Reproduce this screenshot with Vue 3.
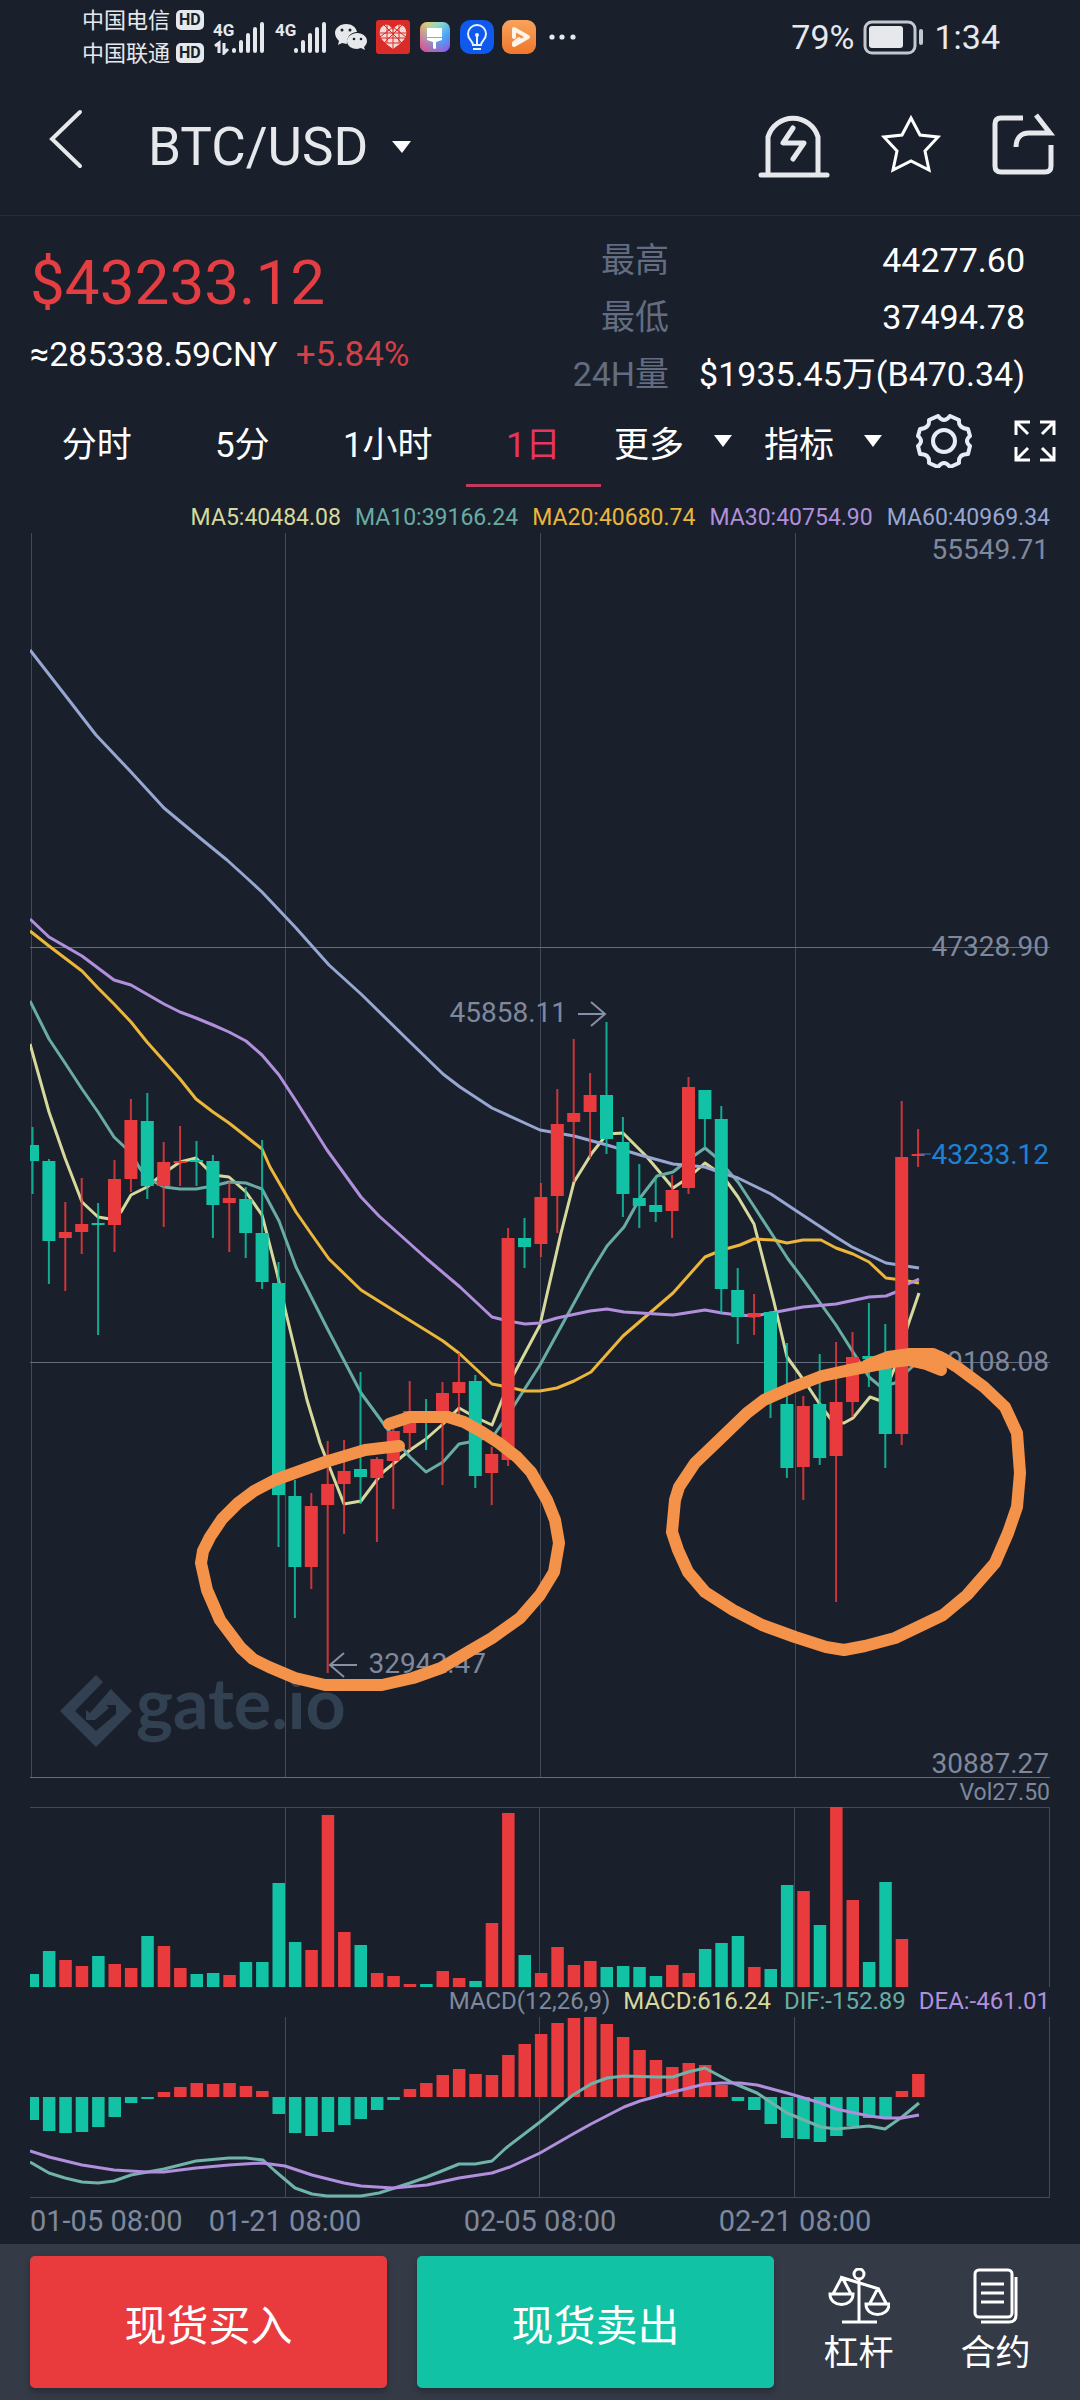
<template>
  <div class="page">
    <div class="status">
      <div class="carriers">
        <div class="carrier">中国电信 <span class="hd">HD</span></div>
        <div class="carrier">中国联通 <span class="hd">HD</span></div>
      </div>
      <svg class="signals" width="114" height="36" viewBox="212 18 114 36">
        <g class="net">
          <text x="212" y="35">4G</text>
          <text x="274" y="35">4G</text>
        </g>
        <path class="line" stroke-width="3" d="M214 45l4-3v10M223 42v10l4-4" />
        <path class="line" stroke-width="4" stroke-linecap="round" d="M233 49v1M240 41v9M247 34v16M254 28v22M261 23v27M295 49v1M302 41v9M309 34v16M316 28v22M323 23v27" />
      </svg>
      <svg class="apps" width="242" height="36" viewBox="335 18 242 36">
        <defs>
          <linearGradient id="paint" x1="0" y1="0" x2="1" y2="1">
            <stop offset="0" stop-color="#ffc94d" />
            <stop offset="0.35" stop-color="#8fd9c9" />
            <stop offset="0.65" stop-color="#4aa8f5" />
            <stop offset="1" stop-color="#9a4bea" />
          </linearGradient>
          <linearGradient id="paintWarm" x1="0" y1="1" x2="0.6" y2="0.5">
            <stop offset="0" stop-color="#ee3f86" />
            <stop offset="1" stop-color="#ee3f86" stop-opacity="0" />
          </linearGradient>
          <linearGradient id="play" x1="0" y1="0" x2="0" y2="1">
            <stop offset="0" stop-color="#f8a35c" />
            <stop offset="1" stop-color="#f0762c" />
          </linearGradient>
        </defs>
        <path fill="#e6e8ec" d="M346 23c-6 0-11 4-11 9 0 3 2 6 4 8l-1 4 4-2 5 1c-1-7 4-12 10-12-1-5-5-8-11-8z" />
        <path fill="#e6e8ec" d="M357 32c-5 0-10 4-10 8 0 5 5 8 10 8l4-1 4 2-1-3c2-2 3-4 3-6 0-4-4-8-10-8z" />
        <g fill="#19202c">
          <circle cx="342" cy="29" r="1.5" /><circle cx="350" cy="29" r="1.5" />
          <circle cx="354" cy="38" r="1.3" /><circle cx="361" cy="38" r="1.3" />
        </g>
        <rect x="376" y="19" width="34" height="34" rx="3" fill="#d92b28" />
        <path fill="#f6d9d5" d="M393 29c2-4 5-6 8-5 4 1 6 5 5 10-1 6-8 10-13 14-5-4-12-8-13-14-1-5 1-9 5-10 3-1 6 1 8 5z" />
        <path class="knot" d="M380 32h26M381 37h24M385 42h16M384 24l18 18M402 24l-18 18M393 28v20M387 24v18M399 24v18M380 36l13-10 13 10" />
        <rect x="420" y="21" width="30" height="30" rx="7" fill="url(#paint)" />
        <rect x="420" y="21" width="30" height="30" rx="7" fill="url(#paintWarm)" />
        <path fill="#fff" d="M427 27h15v9h-15zM427 37h15v2l-6 2v6q-1 2-3 0v-6l-6-2z" />
        <rect x="460" y="19" width="34" height="34" rx="10" fill="#0f59ec" />
        <path fill="none" stroke="#e8f1ff" stroke-width="2" d="M473 44c0-4-5-5-5-11a9 9 0 0 1 18 0c0 6-5 7-5 11zM473 48h8M477 34v10" />
        <circle cx="477" cy="34" r="2" fill="#e8f1ff" />
        <rect x="502" y="19" width="34" height="34" rx="9" fill="url(#play)" />
        <path fill="none" stroke="#fff4e8" stroke-width="4" stroke-linejoin="round" stroke-linecap="round" d="M514 36v-8l14 8-14 8v-2l5-4" />
        <g fill="#e6e8ec">
          <circle cx="552" cy="36" r="2.6" /><circle cx="562" cy="36" r="2.6" /><circle cx="573" cy="36" r="2.6" />
        </g>
      </svg>
      <div class="power">
        <span>79%</span>
        <svg width="62" height="36" viewBox="862 18 62 36">
          <rect x="864" y="21" width="50" height="31" rx="7" fill="none" stroke="#c3c7ce" stroke-width="3" />
          <rect x="868" y="25" width="34" height="22" rx="3" fill="#e6e8ec" />
          <rect x="918" y="28" width="4" height="16" rx="2" fill="#c3c7ce" />
        </svg>
        <span>1:34</span>
      </div>
    </div>

    <header class="topbar">
      <button class="icon-btn back" aria-label="返回">
        <svg width="36" height="62" viewBox="0 0 36 62">
          <path class="line" stroke-width="4" stroke-linecap="round" d="M32 4L4 31l28 27" />
        </svg>
      </button>
      <button class="pair">
        BTC/USD
        <svg width="20" height="12" viewBox="0 0 20 12"><path fill="#fff" d="M0 0h19l-9 12z" /></svg>
      </button>
      <div class="actions">
        <button class="icon-btn" aria-label="提醒">
          <svg width="72" height="70" viewBox="759 109 72 70">
            <path class="line" stroke-width="5" d="M769 173v-36a26 26 0 0 1 50 0v36" />
            <path class="line" stroke-width="5" stroke-linecap="round" d="M762 175h66" />
            <path class="line" stroke-width="5" stroke-linecap="round" stroke-linejoin="round" d="M794 128l-10 15h21l-11 16" />
          </svg>
        </button>
        <button class="icon-btn" aria-label="收藏">
          <svg width="62" height="60" viewBox="878 115 62 60">
            <path fill="none" stroke="#fff" stroke-width="3" d="M909 119l9 17 18 2-13 14 4 19-18-9-18 9 4-19-13-14 18-2z" />
          </svg>
        </button>
        <button class="icon-btn" aria-label="分享">
          <svg width="66" height="64" viewBox="992 109 66 64">
            <path class="line" stroke-width="5" d="M1023 115h-22q-6 0-6 6v42q0 6 6 6h44q6 0 6-6v-21M1016 144c0-9 5-14 13-14h21l-14-18" />
          </svg>
        </button>
      </div>
    </header>

    <section class="quote">
      <div>
        <div class="price">$43233.12</div>
        <div class="fiat">≈285338.59CNY <span class="change">+5.84%</span></div>
      </div>
      <dl class="stats">
        <dt>最高</dt><dd>44277.60</dd>
        <dt>最低</dt><dd>37494.78</dd>
        <dt>24H量</dt><dd>$1935.45万(B470.34)</dd>
      </dl>
    </section>

    <nav class="tabs">
      <div class="periods">
        <button v-for="p in periods" :key="p" class="tab" :class="{ active: p === current }" @click="current = p">{{ p }}</button>
      </div>
      <button v-for="m in menus" :key="m" class="menu">
        {{ m }}
        <svg width="18" height="12" viewBox="0 0 18 12"><path fill="#fff" d="M0 0h18l-9 12z" /></svg>
      </button>
      <div class="tools">
        <button class="icon-btn" aria-label="设置">
          <svg width="56" height="54" viewBox="0 0 56 54">
            <path class="gear" d="M22 2q6 8 12 0l9 4q-1 8 9 9l2 7q-6 5 0 10l-2 8q-10 0-9 9l-9 4q-6-8-12 0l-9-4q1-9-9-9l-2-8q6-5 0-10l2-7q10-1 9-9z" />
            <circle class="gear" cx="28" cy="27" r="11" />
          </svg>
        </button>
        <button class="icon-btn" aria-label="全屏">
          <svg width="42" height="42" viewBox="0 0 42 42">
            <path fill="none" stroke="#fff" stroke-width="3" d="M2 15V2h14M2 2l12 12M26 2h14v13M40 2L28 14M2 27v13h14M2 40l12-12M26 40h14V27M40 40L28 28" />
          </svg>
        </button>
      </div>
    </nav>

    <main class="charts">
      <div class="legend">
        <span v-for="m in averages" :key="m.name" :style="{ color: m.color }">{{ m.name }}:{{ m.value }}</span>
      </div>

      <svg class="plot" viewBox="30 532 1020 1247">
        <path class="grid" d="M31 533V1777M285 533V1777M540 533V1777M795 533V1777" />
        <path class="grid strong" d="M30 947H1050M30 1362H1050M30 1777H1050" />
        <g class="watermark">
          <path d="M111 1689L132 1711 96 1747 60 1711 96 1675 103 1682 75 1711 96 1731 116 1714V1705H106L109 1708 95 1720H86V1710L90 1713Z" />
          <text x="136" y="1729">gate.io</text>
        </g>
        <polyline v-for="m in averages" :key="m.name" class="ma" :points="m.points" :stroke="m.color" />
        <g v-for="(c, i) in candles" :key="i" :fill="colorOf(c)">
          <rect :x="centre(i) - 1" :y="c[1]" width="2" :height="c[4] - c[1]" opacity="0.85" />
          <rect :x="centre(i) - 6.5" :y="c[2]" width="13" :height="c[3] - c[2]" />
        </g>
        <g class="axis">
          <text x="1049" y="559">55549.71</text>
          <text x="1049" y="956">47328.90</text>
          <text x="1049" y="1371">39108.08</text>
          <text x="1049" y="1773">30887.27</text>
          <text x="567" y="1022">45858.11</text>
          <text x="486" y="1673">32942.47</text>
          <text class="last" x="1049" y="1164">43233.12</text>
        </g>
        <path class="pointer" d="M578 1014h27M591 1002l14 12-14 12M357 1665h-27M344 1653l-14 12 14 12" />
        <path stroke="#2b7fd0" stroke-width="1" d="M919 1154h12" />
        <polyline v-for="(p, i) in marks" :key="i" class="mark" :points="p" />
      </svg>

      <div class="legend vol-legend"><span>Vol27.50</span></div>
      <svg class="plot" viewBox="30 1806 1020 181">
        <path class="grid" d="M30 1807H1050M285 1807V1987M539 1807V1987M794 1807V1987M1049 1807V1987" />
        <rect v-for="(v, i) in volumes" :key="i" :x="centre(i) - 6" :y="1987 - v" width="12.5" :height="v" :fill="colorOf(candles[i])" />
      </svg>

      <div class="legend macd-legend">
        <span>MACD(12,26,9)</span>
        <span class="macd">MACD:616.24</span>
        <span class="dif">DIF:-152.89</span>
        <span class="dea">DEA:-461.01</span>
      </div>
      <svg class="plot" viewBox="30 2016 1020 182">
        <path class="grid" d="M30 2197H1050M285 2017V2197M539 2017V2197M794 2017V2197M1049 2017V2197" />
        <rect v-for="(v, i) in macd" :key="i" :x="centre(i) - 6" :y="v > 0 ? 2097 - v : 2097" width="12.5" :height="Math.abs(v)" :fill="v > 0 ? red : green" />
        <polyline class="ma" stroke="#70b3aa" :points="dif" />
        <polyline class="ma" stroke="#b18fdc" :points="dea" />
      </svg>

      <div class="dates">
        <span v-for="d in dates" :key="d">{{ d }}</span>
      </div>
    </main>

    <footer class="trade">
      <button class="order buy">现货买入</button>
      <button class="order sell">现货卖出</button>
      <div class="links">
        <a href="#margin">
          <svg width="62" height="56" viewBox="0 0 62 56">
            <g fill="none" stroke="#fff" stroke-width="3">
              <circle cx="31" cy="6" r="5" />
              <path d="M31 11v42M14 54h35M12 9l39 12M14 9L5 26M14 9l9 17M2 26h23c0 14-23 14-23 0zM50 20l-9 17M50 20l9 17M38 36h23c0 14-23 14-23 0z" />
            </g>
          </svg>
          杠杆
        </a>
        <a href="#futures">
          <svg width="46" height="56" viewBox="0 0 46 56">
            <g fill="none" stroke="#fff" stroke-width="3">
              <rect x="2" y="2" width="37" height="47" rx="4" />
              <path d="M43 9v38q0 7-7 7H8M8 16h23M8 25h23M8 34h23" />
            </g>
          </svg>
          合约
        </a>
      </div>
    </footer>
  </div>
</template>

<script setup>
import { ref } from "vue";

const red = "#e93b3d";
const green = "#11c2a5";

const periods = ["分时", "5分", "1小时", "1日"];
const menus = ["更多", "指标"];
const current = ref("1日");
const dates = ["01-05 08:00", "01-21 08:00", "02-05 08:00", "02-21 08:00"];

const centre = (i) => 32.5 + i * 16.4;
const colorOf = (c) => (c[0] ? red : green);

// [rising, high, body top, body bottom, low]
const candles = [
  [0, 1127, 1145, 1161, 1194], [0, 1159, 1161, 1241, 1284], [1, 1202, 1232, 1238, 1291],
  [1, 1178, 1224, 1232, 1254], [0, 1203, 1223, 1225, 1335], [1, 1160, 1179, 1225, 1252],
  [1, 1099, 1120, 1179, 1192], [0, 1093, 1121, 1186, 1199], [1, 1142, 1162, 1186, 1227],
  [1, 1126, 1161, 1163, 1186], [0, 1141, 1160, 1162, 1186], [0, 1155, 1161, 1205, 1238],
  [1, 1182, 1198, 1203, 1252], [0, 1187, 1199, 1233, 1258], [0, 1140, 1233, 1282, 1289],
  [0, 1262, 1283, 1495, 1547], [0, 1480, 1496, 1567, 1618], [1, 1493, 1506, 1567, 1589],
  [1, 1441, 1484, 1505, 1673], [1, 1440, 1471, 1484, 1534], [0, 1372, 1469, 1477, 1504],
  [1, 1457, 1459, 1478, 1542], [1, 1427, 1431, 1461, 1509], [1, 1381, 1411, 1433, 1450],
  [0, 1399, 1411, 1413, 1450], [1, 1382, 1393, 1415, 1485], [1, 1353, 1382, 1393, 1417],
  [0, 1375, 1381, 1476, 1488], [1, 1447, 1454, 1473, 1505], [1, 1228, 1238, 1460, 1466],
  [0, 1218, 1238, 1247, 1268], [1, 1183, 1197, 1244, 1257], [1, 1089, 1124, 1196, 1233],
  [1, 1039, 1113, 1122, 1182], [1, 1073, 1095, 1112, 1158], [0, 1022, 1095, 1139, 1154],
  [0, 1117, 1142, 1194, 1217], [0, 1164, 1198, 1206, 1228], [0, 1177, 1205, 1212, 1222],
  [1, 1175, 1190, 1211, 1238], [1, 1077, 1087, 1188, 1194], [0, 1090, 1090, 1119, 1148],
  [0, 1106, 1119, 1289, 1313], [0, 1268, 1290, 1317, 1344], [1, 1294, 1313, 1317, 1335],
  [0, 1311, 1312, 1400, 1418], [0, 1343, 1404, 1468, 1478], [1, 1396, 1406, 1467, 1500],
  [0, 1354, 1404, 1458, 1465], [1, 1342, 1402, 1456, 1602], [1, 1332, 1357, 1402, 1417],
  [0, 1303, 1356, 1359, 1387], [0, 1324, 1358, 1434, 1468], [1, 1101, 1157, 1434, 1445],
  [1, 1129, 1154, 1156, 1167],
];

const volumes = [
  13, 36, 27, 21, 31, 23, 19, 51, 41, 19, 13, 14, 12, 25, 25, 104, 45, 37, 172, 55, 42, 14, 11, 3, 3, 16, 9, 6,
  64, 174, 32, 14, 40, 22, 26, 20, 21, 20, 11, 22, 14, 38, 44, 51, 20, 18, 102, 96, 62, 180, 87, 25, 105, 48,
];

const macd = [
  -23, -34, -36, -35, -30, -20, -6, -2, 5, 10, 14, 13, 14, 11, 6, -17, -36, -39, -35, -28, -22, -13, -3, 8, 14,
  22, 28, 23, 22, 42, 53, 63, 74, 79, 80, 73, 60, 47, 37, 30, 34, 32, 12, -4, -13, -27, -41, -42, -45, -39, -29,
  -21, -20, 6, 23,
];

const averages = [
  {
    name: "MA5",
    value: "40484.08",
    color: "#d6d99b",
    points:
      "30,1044 49,1112 65,1158 82,1202 98,1217 110,1219 121,1212 131,1195 147,1187 164,1173 180,1162 196,1158 213,1175 229,1177 246,1192 262,1215 277,1273 286,1313 307,1400 320,1443 344,1504 361,1501 382,1473 410,1450 426,1439 443,1424 459,1408 475,1417 492,1425 508,1385 540,1325 561,1233 574,1182 592,1153 607,1134 623,1133 647,1157 673,1188 688,1178 705,1163 722,1175 738,1197 754,1224 774,1302 787,1357 805,1382 819,1403 833,1422 844,1423 853,1418 870,1397 881,1401 895,1367 908,1325 919,1293",
  },
  {
    name: "MA10",
    value: "39166.24",
    color: "#68aca4",
    points:
      "30,1001 49,1039 65,1063 82,1089 98,1112 114,1137 131,1153 139,1167 147,1178 164,1187 180,1189 196,1189 213,1186 229,1182 246,1183 262,1189 279,1221 296,1267 327,1328 361,1393 394,1438 410,1457 426,1472 443,1462 459,1444 475,1441 494,1435 508,1415 540,1365 557,1334 591,1272 607,1246 624,1227 640,1198 657,1176 673,1172 688,1160 705,1148 717,1158 738,1182 755,1208 788,1259 803,1279 836,1325 853,1352 869,1377 881,1387 895,1383 912,1367 919,1360",
  },
  {
    name: "MA20",
    value: "40680.74",
    color: "#ecb63b",
    points:
      "30,931 49,946 82,971 98,988 114,1004 131,1022 147,1042 180,1079 196,1099 213,1112 229,1123 262,1149 270,1167 296,1212 312,1235 329,1259 361,1290 393,1310 427,1331 443,1341 460,1354 492,1384 508,1387 525,1391 540,1391 557,1388 574,1381 591,1372 623,1336 673,1293 705,1257 722,1250 740,1245 754,1239 774,1240 787,1243 803,1240 821,1240 836,1248 853,1254 869,1262 886,1278 902,1280 919,1283",
  },
  {
    name: "MA30",
    value: "40754.90",
    color: "#b18fdc",
    points:
      "30,919 49,937 82,956 114,980 131,985 164,1004 180,1012 196,1018 213,1025 229,1032 246,1041 262,1055 279,1075 296,1101 327,1150 361,1197 379,1216 427,1259 460,1287 492,1317 508,1321 525,1324 540,1323 557,1318 590,1311 607,1309 624,1312 673,1315 705,1310 722,1313 738,1315 754,1316 771,1313 787,1310 803,1307 836,1304 869,1297 886,1296 896,1292 908,1284 919,1279",
  },
  {
    name: "MA60",
    value: "40969.34",
    color: "#98a6d2",
    points:
      "30,650 65,695 96,735 131,772 164,808 200,838 227,860 249,880 262,892 296,928 329,965 361,994 410,1042 443,1074 460,1087 492,1108 540,1130 574,1136 607,1145 640,1155 673,1164 705,1167 722,1173 738,1178 771,1194 795,1210 836,1237 852,1247 886,1263 919,1268",
  },
];

const dif =
  "30,2162 49,2173 65,2178 82,2182 98,2183 114,2181 131,2175 164,2169 196,2161 229,2158 246,2158 263,2160 275,2171 295,2188 312,2194 327,2196 361,2196 379,2193 410,2183 427,2177 459,2164 475,2164 492,2161 506,2148 540,2122 573,2095 591,2084 607,2078 624,2076 657,2077 673,2077 688,2072 705,2068 733,2083 757,2093 787,2113 821,2127 836,2129 869,2126 885,2129 902,2117 919,2103";
const dea =
  "30,2151 49,2157 82,2165 114,2170 147,2172 164,2172 196,2168 229,2165 262,2163 285,2166 312,2175 344,2183 361,2186 393,2188 427,2185 459,2178 492,2173 510,2167 540,2153 573,2134 591,2124 624,2107 640,2101 673,2092 705,2084 722,2083 740,2083 757,2085 787,2093 821,2103 836,2109 869,2116 885,2118 902,2118 919,2115";

// hand-drawn circles
const marks = [
  "399,1446 365,1450 325,1462 275,1480 254,1491 238,1503 222,1519 210,1537 203,1551 201,1563 207,1590 220,1620 241,1648 253,1659 269,1667 295,1678 325,1685 382,1685 413,1678 441,1668 468,1652 492,1638 520,1618 540,1595 554,1572 559,1543 555,1520 547,1500 531,1472 517,1457 499,1443 482,1432 464,1422 448,1417 410,1417 389,1424",
  "941,1370 926,1364 908,1360 891,1362 850,1370 822,1376 791,1388 764,1400 747,1413 719,1440 695,1463 679,1487 675,1500 672,1532 678,1550 688,1572 705,1592 733,1610 762,1625 795,1637 826,1647 844,1650 865,1646 895,1638 943,1615 967,1595 995,1563 1008,1533 1017,1507 1020,1473 1017,1433 1005,1407 984,1387 957,1367 944,1359 933,1354 910,1354 888,1357 867,1365",
];
</script>

<style>
body {
  margin: 0;
  background: #19202c;
}
</style>

<style scoped>
.page {
  display: flex;
  flex-direction: column;
  min-height: 100vh;
  background: #19202c;
  color: #fff;
  font-family: Roboto, "Noto Sans CJK SC", sans-serif;
}

button {
  padding: 0;
  border: 0;
  background: none;
  color: inherit;
  font: inherit;
  cursor: pointer;
}

svg {
  display: block;
}

.line {
  fill: none;
  stroke: #e6e8ec;
}

.icon-btn {
  display: block;
}

/* status bar */
.status {
  display: flex;
  align-items: center;
  height: 73px;
  padding: 0 80px 0 82px;
  color: #e6e8ec;
}

.carrier {
  display: flex;
  align-items: center;
  gap: 6px;
  font-size: 22px;
  line-height: 33px;
}

.hd {
  padding: 0 3px;
  border-radius: 5px;
  background: #e6e8ec;
  color: #19202c;
  font-size: 16px;
  font-weight: 700;
  line-height: 20px;
}

.signals {
  margin-left: 9px;
}

.net {
  fill: #e6e8ec;
  font-family: "Liberation Sans Narrow", Roboto, sans-serif;
  font-size: 17px;
  font-weight: 700;
}

.apps {
  margin-left: 8px;
}

.knot {
  fill: none;
  stroke: #d92b28;
  stroke-width: 1;
}

.power {
  display: flex;
  align-items: center;
  gap: 9px;
  margin-left: auto;
  font-size: 34px;
}

/* top bar */
.topbar {
  display: flex;
  align-items: center;
  height: 142px;
  padding: 0 22px 0 48px;
  border-bottom: 1px solid #272e3c;
}

.back {
  padding-bottom: 10px;
}

.pair {
  display: flex;
  align-items: center;
  gap: 24px;
  margin-left: 64px;
  padding-top: 6px;
  color: #e6e8ec;
  font-size: 53px;
}

.actions {
  display: flex;
  align-items: center;
  gap: 50px;
  margin-left: auto;
}

/* quote */
.quote {
  display: flex;
  justify-content: space-between;
  padding: 16px 55px 0 30px;
}

.price {
  color: #e43d42;
  font-size: 62px;
  line-height: 102px;
}

.fiat {
  font-size: 34px;
  line-height: 40px;
}

.change {
  margin-left: 10px;
  color: #d23f45;
  font-size: 35px;
}

.stats {
  display: grid;
  grid-template-columns: auto auto;
  column-gap: 30px;
  margin: 0;
  font-size: 34px;
  line-height: 57px;
  text-align: right;
}

.stats dt {
  color: #636c80;
}

.stats dd {
  margin: 0;
}

/* period tabs */
.tabs {
  display: flex;
  align-items: stretch;
  height: 84px;
  padding: 0 24px;
  font-size: 35px;
}

.periods {
  display: flex;
  flex: 1;
  margin-right: 8px;
}

.tab {
  flex: 1;
  margin: 0 5px;
  padding-bottom: 5px;
  border-bottom: 3px solid transparent;
}

.tab.active {
  border-color: #c03a5e;
  color: #e8345f;
}

.menu {
  display: flex;
  align-items: center;
  gap: 30px;
  margin-right: 32px;
  padding-bottom: 8px;
}

.tools {
  display: flex;
  align-items: center;
  gap: 42px;
  margin-left: 2px;
  padding-bottom: 8px;
}

.gear {
  fill: none;
  stroke: #e8ecf6;
  stroke-width: 4;
  stroke-linejoin: round;
}

/* charts */
.charts {
  flex: 1;
  padding: 0 30px;
}

.plot {
  width: 100%;
  height: auto;
}

.legend {
  display: flex;
  justify-content: flex-end;
  gap: 14px;
  padding-top: 16px;
  color: #7f889c;
  font-size: 23px;
  line-height: 29px;
  white-space: nowrap;
}

.vol-legend {
  padding-top: 0;
  line-height: 27px;
}

.macd-legend {
  gap: 13px;
  padding-top: 0;
  font-size: 24px;
}

.macd {
  color: #d6d99b;
}

.dif {
  color: #68aca4;
}

.dea {
  color: #b18fdc;
}

.grid {
  fill: none;
  stroke: #434a59;
  stroke-width: 1;
  shape-rendering: crispEdges;
}

.strong {
  stroke: #646b7b;
}

.watermark {
  fill: #324152;
}

.watermark text {
  font-family: Lato, sans-serif;
  font-size: 70px;
  font-weight: 700;
}

.ma {
  fill: none;
  stroke-width: 3;
  stroke-linejoin: round;
}

.axis {
  fill: #7f889c;
  font-size: 28px;
  text-anchor: end;
}

.last {
  fill: #2080d6;
}

.pointer {
  fill: none;
  stroke: #8790a6;
  stroke-width: 2;
}

.mark {
  fill: none;
  stroke: #f49249;
  stroke-width: 12;
  stroke-linecap: round;
  stroke-linejoin: round;
}

.dates {
  display: grid;
  grid-template-columns: minmax(0, 1fr) repeat(3, minmax(0, 2fr)) minmax(0, 1fr);
  color: #7f889c;
  font-size: 29px;
  line-height: 46px;
  text-align: center;
  white-space: nowrap;
}

/* trade bar */
.trade {
  display: flex;
  gap: 30px;
  padding: 12px 16px 12px 30px;
  background: #343b47;
}

.order {
  flex: 1;
  height: 132px;
  border-radius: 5px;
  box-shadow: 0 4px 6px rgba(0, 0, 0, 0.25);
  font-size: 42px;
}

.buy {
  background: #e93b3d;
}

.sell {
  background: #11c2a5;
}

.links {
  display: flex;
  margin-left: -14px;
}

.links a {
  display: flex;
  flex-direction: column;
  align-items: center;
  width: 137px;
  padding-top: 12px;
  color: #fff;
  font-size: 35px;
  line-height: 60px;
  text-decoration: none;
}
</style>
